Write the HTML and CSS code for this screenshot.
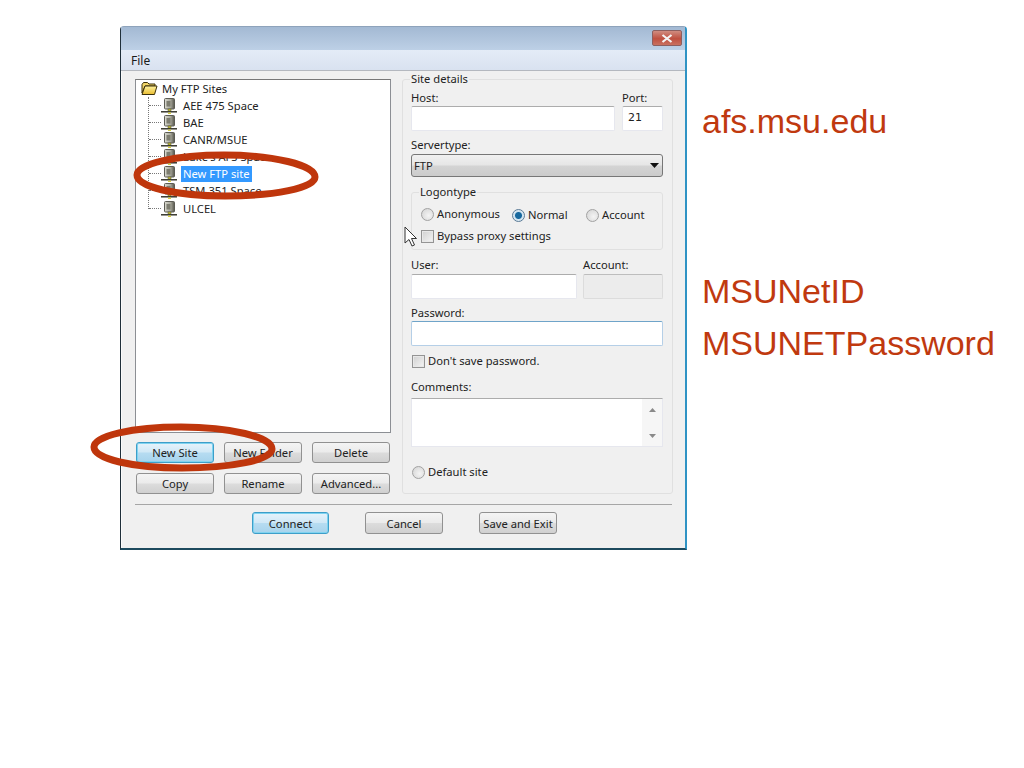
FILE: index.html
```html
<!DOCTYPE html>
<html lang="en">
<head>
<meta charset="utf-8">
<title>Site Manager</title>
<link rel="stylesheet" href="styles.css">
</head>
<body>
<svg class="defs" width="0" height="0" aria-hidden="true">
  <defs>
    <linearGradient id="tower" x1="0" x2="1" y1="0" y2="0">
      <stop offset="0" stop-color="#dcdcd2"/><stop offset=".6" stop-color="#a8a89c"/><stop offset="1" stop-color="#55554c"/>
    </linearGradient>
    <linearGradient id="fold" x1="0" x2="0" y1="0" y2="1">
      <stop offset="0" stop-color="#fff3a0"/><stop offset="1" stop-color="#e8bc30"/>
    </linearGradient>
    <symbol id="server" viewBox="0 0 16 16">
      <rect x="3.500" y="0.500" width="10" height="10.500" rx="1" fill="url(#tower)" stroke="#5c5c54"/>
      <rect x="5.500" y="3" width="4" height="5.500" fill="#7d7d70"/>
      <rect x="7" y="11" width="3" height="2" fill="#c8c23a" stroke="#55552a" stroke-width=".5"/>
      <path d="M0 13.800h16" stroke="#2b2b20" stroke-width="1.400"/>
      <rect x="7" y="14.600" width="3" height="1.400" fill="#d8d040"/>
    </symbol>
    <symbol id="folder" viewBox="0 0 17 15">
      <path d="M1 3.500 2.500 1.500h4l1.500 1.500h6v2H4L1 12z" fill="#f0d466" stroke="#3c300a"/>
      <path d="M1 13.500 4 5h12l-2.500 8.500z" fill="url(#fold)" stroke="#3c300a"/>
    </symbol>
  </defs>
</svg>

<main class="slide">
  <section class="window">
    <header class="titlebar">
      <span class="close"><svg width="14" height="9" viewBox="0 0 14 9"><path d="M2.500 1 11.500 8M11.500 1 2.500 8" stroke="#f4f4f4" stroke-width="2.200"/></svg></span>
    </header>
    <nav class="menubar">File</nav>
    <div class="content">
      <div class="panels">
        <div class="left">
          <div class="tree">
            <div class="root"><svg class="folder"><use href="#folder"/></svg><span>My FTP Sites</span></div>
            <ul class="sites">
              <li><i class="conn"></i><svg class="srv"><use href="#server"/></svg><span>AEE 475 Space</span></li>
              <li><i class="conn"></i><svg class="srv"><use href="#server"/></svg><span>BAE</span></li>
              <li><i class="conn"></i><svg class="srv"><use href="#server"/></svg><span>CANR/MSUE</span></li>
              <li><i class="conn"></i><svg class="srv"><use href="#server"/></svg><span>Luke's AFS Space</span></li>
              <li><i class="conn"></i><svg class="srv"><use href="#server"/></svg><span class="sel">New FTP site</span></li>
              <li><i class="conn"></i><svg class="srv"><use href="#server"/></svg><span>TSM 351 Space</span></li>
              <li class="last"><i class="conn"></i><svg class="srv"><use href="#server"/></svg><span>ULCEL</span></li>
            </ul>
          </div>
          <div class="actions">
            <button class="btn focus">New Site</button>
            <button class="btn">New Folder</button>
            <button class="btn">Delete</button>
            <button class="btn">Copy</button>
            <button class="btn">Rename</button>
            <button class="btn">Advanced...</button>
          </div>
        </div>

        <div class="group">
          <span class="legend">Site details</span>
          <div class="pair host">
            <label>Host:</label><label>Port:</label>
            <div class="input"></div><div class="input port">21</div>
          </div>
          <label class="lab-server">Servertype:</label>
          <div class="select"><span>FTP</span><svg width="9" height="5" viewBox="0 0 9 5"><path d="M0 0h9L4.500 5z" fill="#111"/></svg></div>
          <div class="logon">
            <span class="legend small">Logontype</span>
            <div class="radios">
              <span class="opt anon"><i class="radio"></i>Anonymous</span>
              <span class="opt normal"><i class="radio on"></i>Normal</span>
              <span class="opt acct"><i class="radio"></i>Account</span>
            </div>
            <span class="opt bypass"><i class="check"></i>Bypass proxy settings</span>
          </div>
          <div class="pair user">
            <label>User:</label><label>Account:</label>
            <div class="input"></div><div class="input off"></div>
          </div>
          <label class="lab-pass">Password:</label>
          <div class="input focusfield"></div>
          <span class="opt nosave"><i class="check"></i>Don't save password.</span>
          <label class="lab-comments">Comments:</label>
          <div class="textarea">
            <div class="scroll">
              <svg width="7" height="4" viewBox="0 0 7 4"><path d="M0 4 3.500 0 7 4z" fill="#8a8a8a"/></svg>
              <svg width="7" height="4" viewBox="0 0 7 4"><path d="M0 0 3.500 4 7 0z" fill="#8a8a8a"/></svg>
            </div>
          </div>
          <span class="opt default"><i class="radio"></i>Default site</span>
        </div>
      </div>
      <hr class="sep">
      <div class="footer">
        <button class="btn focus connect">Connect</button>
        <button class="btn">Cancel</button>
        <button class="btn">Save and Exit</button>
      </div>
    </div>
  </section>

  <aside class="notes">
    <p class="n1">afs.msu.edu</p>
    <p class="n2">MSUNetID</p>
    <p class="n3">MSUNETPassword</p>
  </aside>

  <svg class="oval o1" width="196" height="56" viewBox="0 0 196 56"><path d="M8 27C8 16 46 7 95 7c49 0 91 10 91 22 0 11-41 19-90 19C47 48 8 39 8 27z" fill="none" stroke="#bf360c" stroke-width="7"/></svg>
  <svg class="oval o2" width="196" height="56" viewBox="0 0 196 56"><path d="M8 27C8 16 46 7 95 7c49 0 91 10 91 22 0 11-41 19-90 19C47 48 8 39 8 27z" fill="none" stroke="#bf360c" stroke-width="7"/></svg>
  <svg class="cursor" width="14" height="22" viewBox="0 0 14 22"><path d="M1 1v16l4-3.500 3 6.500 2.500-1-3-6.500h5z" fill="#fff" stroke="#333"/></svg>
</main>
</body>
</html>
```
FILE: styles.css
```css
* { box-sizing: border-box; }
html, body { margin: 0; padding: 0; background: #fff; }
body { width: 1024px; height: 768px; overflow: hidden; font-family: "Noto Sans", "Open Sans", sans-serif; font-size: 11.2px; color: #222; }
.defs { display: block; height: 0; }
.slide { position: relative; display: flex; align-items: flex-start; width: 1024px; height: 768px; padding: 26px 0 0 120px; }

.window { flex: none; width: 567px; height: 524px; display: flex; flex-direction: column; border: 1px solid #1f2f3a; border-top-color: #8ea3bb; border-right: 2px solid #2f93c4; border-bottom: 2px solid #1d4a5e; border-radius: 4px 4px 0 0; background: #f0f0f0; }
.titlebar { flex: none; height: 23px; display: flex; justify-content: flex-end; padding: 3px 3px 0 0; background: linear-gradient(#a3b9d3, #bdd0e6); }
.close { width: 30px; height: 16px; display: flex; align-items: center; justify-content: center; background: linear-gradient(#d08c80, #bf5040 55%, #c9705f); border: 1px solid #8d5f5f; border-radius: 2px; }
.menubar { flex: none; height: 21px; padding: 3px 0 0 10px; line-height: 15px; font-size: 12px; color: #1a1a1a; background: linear-gradient(#e4ecf7, #d9e2f0); border-bottom: 1px solid #b4b8bf; }
.content { flex: 1; display: flex; flex-direction: column; padding: 8px 13px 0 14px; box-shadow: inset 1px 0 0 #fafafa; }
.panels { display: flex; gap: 11px; height: 415px; }

.left { width: 256px; flex: none; }
.tree { height: 354px; background: #fff; border: 1px solid #8c8f94; border-top-color: #777; padding: 0 0 0 5px; line-height: 17px; }
.root { display: flex; align-items: center; gap: 4px; height: 17px; }
.folder { width: 17px; height: 15px; }
.sites { list-style: none; margin: 0 0 0 7px; padding: 0; border-left: 1px dotted #777; height: 112px; }
.sites li { display: flex; align-items: center; height: 17px; white-space: nowrap; }
.sites .last { margin-top: 1px; }
.conn { width: 12px; border-top: 1px dotted #777; flex: none; }
.srv { width: 16px; height: 16px; flex: none; margin-right: 6px; }
.sel { background: #3399ff; color: #fff; padding: 0 2px; margin-left: -2px; line-height: 16px; }
.actions { display: grid; grid-template-columns: repeat(3, 78px); grid-auto-rows: 21px; column-gap: 10px; row-gap: 10px; margin: 9px 0 0 1px; }

.btn { font: inherit; color: #222; padding: 0; height: 21px; width: 78px; border: 1px solid #919191; border-radius: 3px; background: linear-gradient(#f4f4f4 0, #ebebeb 48%, #dcdcdc 52%, #d0d0d0 100%); white-space: nowrap; }
.btn.focus { border-color: #3d9ec9; box-shadow: inset 0 0 0 1px #7fd3f0; background: linear-gradient(#e6f3fb, #d0e8f6 48%, #b6dcf1 52%, #a7d3ec); }

.group { position: relative; flex: none; width: 271px; height: 415px; border: 1px solid #e0e0e0; border-radius: 3px; padding: 11px 9px 0 8px; display: flex; flex-direction: column; align-items: stretch; }
.legend { position: absolute; top: -8px; left: 7px; padding: 0 1px; background: #f0f0f0; line-height: 14px; }
label, .opt { display: block; height: 14px; line-height: 14px; white-space: nowrap; }
.pair { display: grid; column-gap: 7px; row-gap: 1px; grid-template-columns: 204px 41px; grid-template-rows: 14px 25px; }
.pair.user { grid-template-columns: 166px 80px; column-gap: 6px; row-gap: 2px; margin-top: 8px; }
.input { height: 25px; background: #fff; border: 1px solid #e6e7ee; border-top-color: #acacac; border-radius: 2px; }
.input.port { padding: 3px 0 0 5px; line-height: 15px; font-family: "DejaVu Sans", sans-serif; font-size: 11px; }
.input.off { background: #ececec; border-color: #dcdcdc; border-top-color: #bdbdbd; }
.input.focusfield { border-color: #b5cfe7; border-top-color: #6fa4c9; }
.lab-server { margin-top: 7px; }
.select { margin-top: 2px; height: 23px; display: flex; align-items: center; justify-content: space-between; padding: 0 3px 0 2px; border: 1px solid #777; border-radius: 3px; background: linear-gradient(#f1f1f1, #e6e6e6 48%, #d4d4d4 52%, #cbcbcb); }
.logon { position: relative; margin-top: 15px; height: 58px; border: 1px solid #e0e0e0; border-radius: 3px; padding: 14px 0 0 9px; }
.legend.small { left: 7px; }
.radios { display: flex; height: 14px; }
.opt { display: flex; align-items: center; gap: 3px; }
.radio { flex: none; width: 13px; height: 13px; border-radius: 50%; border: 1px solid #a2a2a2; background: radial-gradient(circle at 60% 60%, #f4f4f4, #d2d2d2); }
.radio.on { border-color: #5a7a96; background: radial-gradient(circle, #17689e 0 3px, #cfe3f0 4px, #eef4f8); }
.check { flex: none; width: 13px; height: 13px; border: 1px solid #949494; background: linear-gradient(135deg, #d0d0d0, #f5f5f5); box-shadow: inset 0 0 0 1px #e8e8e8; }
.anon { width: 91px; }
.normal { width: 74px; }
.normal, .acct { position: relative; top: 1px; }
.bypass { margin-top: 8px; }
.lab-pass { margin-top: 7px; }
.focusfield { margin-top: 1px; }
.nosave { margin-top: 8px; margin-left: 1px; }
.lab-comments { margin-top: 12px; }
.textarea { margin-top: 4px; height: 49px; background: #fff; border: 1px solid #e6e7ee; border-top-color: #acacac; display: flex; justify-content: flex-end; }
.scroll { width: 20px; background: #f6f6f6; display: flex; flex-direction: column; justify-content: space-between; align-items: center; padding: 9px 0 8px; }
.default { margin-top: 18px; margin-left: 1px; }

.sep { margin: 10px 0 0; height: 1px; border: 0; background: #a6a6a6; }
.footer { display: flex; gap: 36px; margin: 7px 0 0 117px; }
.footer .btn { height: 22px; }
.footer .connect { width: 77px; }

.notes { margin-left: 15px; font-family: "Liberation Sans", Arial, sans-serif; font-size: 34px; line-height: 40px; color: #c0390f; }
.notes p { margin: 0; white-space: nowrap; }
.notes .n1 { padding-top: 75px; }
.notes .n2 { margin-top: 130px; }
.notes .n3 { margin-top: 12px; }

.oval { position: absolute; }
.o1 { left: 129px; top: 148px; }
.o2 { left: 86px; top: 420px; }
.cursor { position: absolute; left: 404px; top: 226px; }
```
